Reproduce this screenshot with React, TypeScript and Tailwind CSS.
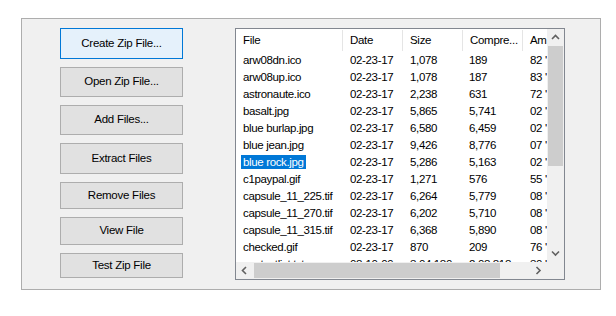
import React from "react";

const rows: [string, string, string, string, string][] = [
  ["arw08dn.ico", "02-23-17", "1,078", "189", "82 '"],
  ["arw08up.ico", "02-23-17", "1,078", "187", "83 '"],
  ["astronaute.ico", "02-23-17", "2,238", "631", "72 '"],
  ["basalt.jpg", "02-23-17", "5,865", "5,741", "02 '"],
  ["blue burlap.jpg", "02-23-17", "6,580", "6,459", "02 '"],
  ["blue jean.jpg", "02-23-17", "9,426", "8,776", "07 '"],
  ["blue rock.jpg", "02-23-17", "5,286", "5,163", "02 '"],
  ["c1paypal.gif", "02-23-17", "1,271", "576", "55 '"],
  ["capsule_11_225.tif", "02-23-17", "6,264", "5,779", "08 '"],
  ["capsule_11_270.tif", "02-23-17", "6,202", "5,710", "08 '"],
  ["capsule_11_315.tif", "02-23-17", "6,368", "5,890", "08 '"],
  ["checked.gif", "02-23-17", "870", "209", "76 '"],
  ["contactlist.txt", "08-10-09", "3,04,180", "2,08,818", "30 '"],
];

const buttons: [string, string][] = [
  ["Create Zip File...", "h-[31px]"],
  ["Open Zip File...", "h-[30px]"],
  ["Add Files...", "h-[30px]"],
  ["Extract Files", "h-[31px]"],
  ["Remove Files", "h-[27px]"],
  ["View File", "h-[28px]"],
  ["Test Zip File", "h-[25px]"],
];

const Chevron = ({ dir }: { dir: "up" | "down" | "left" | "right" }) => {
  const d = {
    up: "M1 5 L4.5 1.5 L8 5",
    down: "M1 1.5 L4.5 5 L8 1.5",
    left: "M5 1 L1.5 4.5 L5 8",
    right: "M1.5 1 L5 4.5 L1.5 8",
  }[dir];
  const vertical = dir === "up" || dir === "down";
  return (
    <svg width={vertical ? 9 : 7} height={vertical ? 7 : 9} viewBox={vertical ? "0 0 9 7" : "0 0 7 9"}>
      <path d={d} fill="none" stroke="#606060" strokeWidth="1.6" />
    </svg>
  );
};

export default function App() {
  return (
    <div
      className="w-[616px] h-[316px] bg-white pt-[18px] pl-[21px]"
      style={{ fontFamily: '"Liberation Sans", Arial, sans-serif' }}
    >
      <div className="w-[580px] h-[272px] border border-[#adadad] bg-[#f0f0f0] flex pt-[9px] pl-[38px]">
        <div className="flex flex-col gap-[8px] w-[123px]">
          {buttons.map(([label, h], i) => (
            <div
              key={label}
              className={`${h} flex items-center justify-center text-[11.5px] tracking-[-0.25px] text-black border ${
                i === 0 ? "border-[#0078d7] bg-[#e5f1fb]" : "border-[#adadad] bg-[#e1e1e1]"
              }`}
            >
              {label}
            </div>
          ))}
        </div>
        <div className="ml-[52px] w-[330px] h-[252px] border border-[#828790] bg-white flex flex-col">
          <div className="flex h-[233px]">
            <div className="w-[311px] overflow-hidden flex flex-col">
              <div className="flex h-[23px] items-center text-[11.5px] tracking-[-0.3px] text-black shrink-0">
                {[
                  ["File", "w-[107px]"],
                  ["Date", "w-[60px]"],
                  ["Size", "w-[60px]"],
                  ["Compre...", "w-[60px]"],
                  ["Am", "w-[60px]"],
                ].map(([t, w]) => (
                  <div key={t} className={`${w} shrink-0 h-[21px] flex items-center pl-[7px] border-r border-[#e5e5e5] whitespace-nowrap`}>
                    {t}
                  </div>
                ))}
              </div>
              {rows.map((r, i) => (
                <div key={i} className="flex h-[17px] items-center text-[11.5px] tracking-[-0.35px] text-black shrink-0 whitespace-nowrap">
                  <div className="w-[107px] shrink-0 pl-[5px]">
                    <span className={`px-[2px] py-[1px] ${i === 6 ? "bg-[#0078d7] text-white" : ""}`}>{r[0]}</span>
                  </div>
                  <div className="w-[60px] shrink-0 pl-[7px]">{r[1]}</div>
                  <div className="w-[60px] shrink-0 pl-[7px]">{r[2]}</div>
                  <div className="w-[60px] shrink-0 pl-[6px]">{r[3]}</div>
                  <div className="w-[60px] shrink-0 pl-[7px]">{r[4]}</div>
                </div>
              ))}
            </div>
            <div className="w-[17px] bg-[#f0f0f0] flex flex-col">
              <div className="h-[17px] flex items-center justify-center">
                <Chevron dir="up" />
              </div>
              <div className="mx-[1px] h-[120px] bg-[#cdcdcd]" />
              <div className="flex-1" />
              <div className="h-[17px] flex items-center justify-center">
                <Chevron dir="down" />
              </div>
            </div>
          </div>
          <div className="flex h-[17px] bg-[#f0f0f0]">
            <div className="w-[17px] flex items-center justify-center">
              <Chevron dir="left" />
            </div>
            <div className="my-[1px] ml-[1px] w-[246px] bg-[#cdcdcd]" />
            <div className="flex-1" />
            <div className="w-[17px] flex items-center justify-center">
              <Chevron dir="right" />
            </div>
            <div className="w-[17px] bg-[#f0f0f0]" />
          </div>
        </div>
      </div>
    </div>
  );
}
